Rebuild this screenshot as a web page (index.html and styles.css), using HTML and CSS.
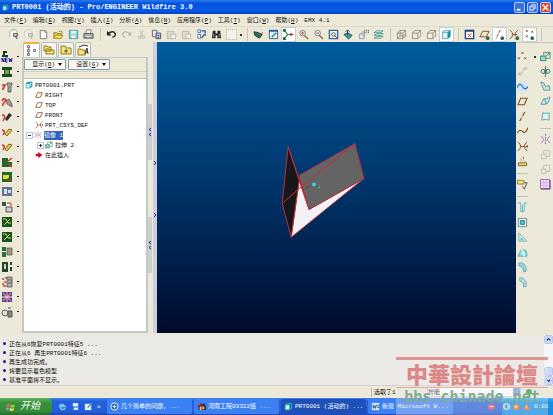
FILE: index.html
```html
<!DOCTYPE html>
<html lang="zh-CN">
<head>
  <meta charset="UTF-8">
  <meta name="viewport" content="width=device-width, initial-scale=1.0">
  <title>PRT0001 (活动的) - Pro/ENGINEER Wildfire 3.0</title>
  <link rel="stylesheet" href="styles.css">
</head>
<body>
  <svg class="defs" aria-hidden="true">
    <symbol id="page-find" viewBox="0 0 12 12"><path d="M2 9V3l2-2h4l2 2v6" fill="#fff" stroke="#999"/><path d="M6 5h4v3H6zM8 8l2 3" fill="#ddd" stroke="#444"/></symbol>
    <symbol id="page" viewBox="0 0 12 12"><path d="M2.500 1.500h5l2 2v7h-7z" fill="#fff" stroke="#777"/><path d="M7.500 1.500v2h2" fill="none" stroke="#777"/></symbol>
    <symbol id="open" viewBox="0 0 12 12"><path d="M1 10V4h3l1 1h4v5z" fill="#e9c832" stroke="#8c7a1c"/><path d="M3 7h8l-2 3H1z" fill="#ffec70" stroke="#8c7a1c" stroke-width=".7"/><path d="M6 3q2-2 4 0v2" fill="none" stroke="#6b8a3a"/></symbol>
    <symbol id="save" viewBox="0 0 12 12"><path d="M1.500 1.500h9v9h-9z" fill="#8fd6d4" stroke="#4d8d95"/><path d="M3.500 2h5v3h-5zM4 7h4v3H4z" fill="#e8f6f4"/></symbol>
    <symbol id="print" viewBox="0 0 12 12"><path d="M3 5l1-4h5L8 5" fill="#fff" stroke="#777"/><path d="M1 5h10v5H1z" fill="#aaa" stroke="#555"/><path d="M3 8h6" stroke="#eee"/></symbol>
    <symbol id="undo" viewBox="0 0 12 12"><path d="M2 5q6-4 8 0 1 3-3 4" fill="none" stroke="#222" stroke-width="1.500"/><path d="M1 2v5h5z" fill="#222"/></symbol>
    <symbol id="redo" viewBox="0 0 12 12"><path d="M10 5Q4 1 2 5 1 8 5 9" fill="none" stroke="#b5b2a4" stroke-width="1.200"/><path d="M11 3v4H7z" fill="#b5b2a4"/></symbol>
    <symbol id="cut" viewBox="0 0 12 12"><path d="M4 1l3 7M8 1L5 8" stroke="#bbb8aa"/><circle cx="4" cy="9" r="1.500" fill="none" stroke="#bbb8aa"/><circle cx="8" cy="9" r="1.500" fill="none" stroke="#bbb8aa"/></symbol>
    <symbol id="copy" viewBox="0 0 12 12"><path d="M1.500 1.500h5v7h-5z" fill="#e4e8f4" stroke="#667"/><path d="M5.500 4.500h5v6h-5z" fill="#c4cfee" stroke="#446"/><path d="M7 7h2M7 9h2" stroke="#446"/></symbol>
    <symbol id="paste" viewBox="0 0 12 12"><path d="M1.500 2.500h7v8h-7z" fill="#dedbcd" stroke="#bbb8aa"/><path d="M5.500 5.500h5v5h-5z" fill="#f3f1e8" stroke="#bbb8aa"/></symbol>
    <symbol id="regen" viewBox="0 0 12 12"><path d="M2 1h3v3H2zM2 6h3v4H2z" fill="#fff" stroke="#4870b0"/><path d="M6 2h4v3M6 10l3-4 2 1" fill="none" stroke="#335b9e" stroke-width="1.500"/></symbol>
    <symbol id="find" viewBox="0 0 12 12"><path d="M2 2h3v3h2V2h3l1 8H7V7H5v3H1z" fill="#26262c"/><path d="M3 5v4M9 5v4" stroke="#999"/></symbol>
    <symbol id="select" viewBox="0 0 12 12"><path d="M.500 .500h11v11h-11z" fill="#f4f2ea" stroke="#aaa" stroke-dasharray="1 1"/></symbol>
    <symbol id="spin" viewBox="0 0 12 12"><path d="M1 3l5 1 4 2-3 4-5-3z" fill="#1b765e" stroke="#163f38"/><path d="M6 6l5-2" stroke="#d33"/></symbol>
    <symbol id="repaint" viewBox="0 0 12 12"><path d="M1.500 1.500h9v9h-9z" fill="#e8f1fa" stroke="#2d5e92"/><path d="M1 2h10" stroke="#2d5e92" stroke-width="2"/><path d="M4 9l5-5" stroke="#2b82c0" stroke-width="1.500"/></symbol>
    <symbol id="center" viewBox="0 0 12 12"><path d="M2 2l3 4-3 4M5 6h4" fill="none" stroke="#3a7d48" stroke-width="1.300"/><path d="M0 0h3v3H0zM0 9h3v3H0z" fill="#2a6a3a"/><path d="M8 4l4 2-4 2z" fill="#c33"/></symbol>
    <symbol id="zoom-in" viewBox="0 0 12 12"><circle cx="5" cy="4.500" r="3" fill="#edf3f6" stroke="#777"/><path d="M7 7l4 4" stroke="#8d6e3e" stroke-width="1.500"/><path d="M3.500 4.500h3M5 3v3" stroke="#c33"/></symbol>
    <symbol id="zoom-out" viewBox="0 0 12 12"><circle cx="5" cy="4.500" r="3" fill="#edf3f6" stroke="#777"/><path d="M7 7l4 4" stroke="#8d6e3e" stroke-width="1.500"/><path d="M3.500 4.500h3" stroke="#c33"/></symbol>
    <symbol id="refit" viewBox="0 0 12 12"><path d="M1.500 1.500h9v9h-9z" fill="#eef4fb" stroke="#3c6a98" stroke-width="1.500"/><circle cx="6" cy="6" r="2" fill="none" stroke="#555"/><path d="M7 7l3 3" stroke="#555"/></symbol>
    <symbol id="orient" viewBox="0 0 12 12"><path d="M1 6l4-2 5 3-4 4z" fill="#3c9aa0" stroke="#1c585c"/><path d="M5 1v6M3 3l2-2 2 2" stroke="#246" fill="none"/></symbol>
    <symbol id="views" viewBox="0 0 12 12"><path d="M1.500 5.500h5v5h-5zM3 5l2-2h2v5L7 9" fill="#dde4e4" stroke="#99a"/><path d="M7.500 1v3M9.500 1v3M11.500 1v3" stroke="#333" stroke-dasharray="1 1"/></symbol>
    <symbol id="layers" viewBox="0 0 12 12"><path d="M1 10l3-2h7L9 10zM1 7l3-2h7L9 7zM1 4l3-2h7L9 4z" fill="#d0ece8" stroke="#3c8a84" stroke-width=".8"/></symbol>
    <symbol id="wire" viewBox="0 0 12 12"><path d="M1.500 4.500h6v6h-6zM4.500 1.500h6v6h-6zM1.500 4.500l3-3M7.500 4.500l3-3M7.500 10.500l3-3M1.500 10.500l3-3" fill="none" stroke="#817a65" stroke-width=".8"/></symbol>
    <symbol id="nohidden" viewBox="0 0 12 12"><path d="M1.500 4.500h6v6h-6zM1.500 4.500l3-3h6v6l-3 3M7.500 4.500l3-3" fill="none" stroke="#817a65" stroke-width=".8"/></symbol>
    <symbol id="shade" viewBox="0 0 12 12"><path d="M1.500 3.500h6v7h-6z" fill="#d9f5f6" stroke="#58aab4"/><path d="M1.500 3.500l3-2h6l-3 2z" fill="#f1ffff" stroke="#58aab4"/><path d="M7.500 3.500l3-2v7l-3 2z" fill="#228c9b"/></symbol>
    <symbol id="model" viewBox="0 0 12 12"><path d="M1.500 1.500h9v9h-9z" fill="#fff" stroke="#24407c" stroke-width="1.500"/><path d="M1 2h10" stroke="#24407c" stroke-width="2"/><path d="M4 5l4 4M8 5L4 9" stroke="#b33"/></symbol>
    <symbol id="plane" viewBox="0 0 12 12"><path d="M1 9.500l3-7h7l-3 7z" fill="none" stroke="#80501f" stroke-width="1.200"/></symbol>
    <symbol id="plane-eye" viewBox="0 0 12 12"><path d="M1 8.500l3-6h7l-3 6z" fill="none" stroke="#80501f"/><circle cx="9.500" cy="10" r="2" fill="#286b4c"/></symbol>
    <symbol id="axis" viewBox="0 0 12 12"><path d="M8.500 1L3 11" stroke="#80501f" stroke-width="1.300" stroke-dasharray="5 1 1 1"/></symbol>
    <symbol id="axis-eye" viewBox="0 0 12 12"><path d="M7 1L2 11" stroke="#80501f" stroke-dasharray="4 1"/><circle cx="9" cy="10" r="2" fill="#286b4c"/></symbol>
    <symbol id="points" viewBox="0 0 12 12"><path d="M5 1l2 2M7 1L5 3M1 7l2 2M3 7L1 9M8 7l2 2M10 7L8 9" stroke="#80401f"/></symbol>
    <symbol id="points-eye" viewBox="0 0 12 12"><path d="M2 1l2 2M4 1L2 3M8 2l2 2M10 2L8 4M2 7l2 2M4 7L2 9" stroke="#a0301f"/><circle cx="9" cy="10" r="2" fill="#286b4c"/></symbol>
    <symbol id="csys" viewBox="0 0 12 12"><path d="M1 1q6 5 0 10M4 6h5M11 1Q5 6 11 11" fill="none" stroke="#80501f"/><path d="M10 5h2v2h-2z" fill="#80501f"/></symbol>
    <symbol id="csys-eye" viewBox="0 0 12 12"><path d="M1 1q6 5 0 10M4 6h5M10 1Q5 5 7 8" fill="none" stroke="#80501f"/><circle cx="9" cy="10" r="2" fill="#286b4c"/></symbol>
    <symbol id="curve" viewBox="0 0 12 12"><path d="M0 8q3-5 6-2t6-4" fill="none" stroke="#80501f" stroke-width="1.200"/></symbol>
    <symbol id="sketch" viewBox="0 0 12 12"><path d="M1 1h10v10H1z" fill="#cfe6fa"/><path d="M0 7q3-6 6-1t6 0" fill="none" stroke="#2d70bd" stroke-width="1.400"/></symbol>
    <symbol id="pts-dim" viewBox="0 0 12 12"><path d="M2 9q3 2 4-3t4-4" fill="none" stroke="#b8b5a7"/><path d="M1 7h3v3H1zM8 1h3v3H8z" fill="#c8c5b7"/></symbol>
    <symbol id="analysis" viewBox="0 0 12 12"><path d="M1.500 7.500h9v3h-9z" fill="#e4d37a" stroke="#80651f"/><path d="M4 3l1 1M7 1v2M4 6l1-1M8 5l1 1" fill="none" stroke="#80501f"/></symbol>
    <symbol id="annot" viewBox="0 0 12 12"><path d="M.500 1.500h7v4h-7z" fill="#f3e86c" stroke="#85803b"/><path d="M8 4h3L8 11M6 8l2 3" fill="none" stroke="#444"/></symbol>
    <symbol id="hole" viewBox="0 0 12 12"><path d="M1 1h3v9l2 1V3M11 1H8v9l-2 1" fill="#bdeff0" stroke="#4ba9b3" stroke-width=".8"/></symbol>
    <symbol id="shell" viewBox="0 0 12 12"><path d="M1.500 1.500h9v9h-9z" fill="#d8f0ee" stroke="#668d93"/><path d="M4 4h4v4H4z" fill="#62cbd2" stroke="#336c72"/></symbol>
    <symbol id="rib" viewBox="0 0 12 12"><path d="M2 1v9h9z" fill="#d0eeee" stroke="#6f9da3" stroke-width=".8"/><path d="M4 6v3h4" fill="#58bcc4"/></symbol>
    <symbol id="draft" viewBox="0 0 12 12"><path d="M1 10l4-8 5 2 1 6z" fill="#92dfe0" stroke="#4c969c" stroke-width=".8"/><path d="M5 2l3 8" stroke="#fff" stroke-width="1.500"/></symbol>
    <symbol id="round" viewBox="0 0 12 12"><path d="M2 1h4q5 3 4 9l-3 1Q8 6 2 4z" fill="#93dadd" stroke="#5b9ca3" stroke-width=".8"/></symbol>
    <symbol id="chamfer" viewBox="0 0 12 12"><path d="M3 1h3l4 4v5l-3 1V7L3 4z" fill="#a8e1e3" stroke="#5b9ca3" stroke-width=".8"/></symbol>
    <symbol id="extrude" viewBox="0 0 12 12"><path d="M.500 5.500h6v5h-6z" fill="#8fd9d3" stroke="#388275"/><path d="M4 5V1.500h7V8H7M6 6l4-4M7 2h3v3" fill="none" stroke="#388275" stroke-width=".8"/></symbol>
    <symbol id="revolve" viewBox="0 0 12 12"><path d="M6 0v12M1 6q1-4 4-2v4q-3 1-4-2zM11 6q-1-4-4-2v4q3 1 4-2z" fill="#cce9e1" stroke="#496d6c"/></symbol>
    <symbol id="sweep" viewBox="0 0 12 12"><path d="M1 1l3 1 2 4 4-1 1 5H4L2 4z" fill="#c1e8e4" stroke="#48827f" stroke-width=".8"/></symbol>
    <symbol id="blend" viewBox="0 0 12 12"><path d="M1 9l3-6q3 1 7-2L9 7q-3 3-8 2zM5 3l2 6" fill="#c1eaf0" stroke="#488292" stroke-width=".8"/></symbol>
    <symbol id="style" viewBox="0 0 12 12"><path d="M3 2q4 1 7 0v8q-4-2-8 0z" fill="#d6f4f3" stroke="#488d92" stroke-width=".8"/></symbol>
    <symbol id="mirror" viewBox="0 0 12 12"><path d="M6 0v12" stroke="#777" stroke-dasharray="2 1"/><path d="M1 2l3 3v2l-3 3M11 2L8 5v2l3 3" fill="#f0dcf8" stroke="#b36fd0"/></symbol>
    <symbol id="merge" viewBox="0 0 12 12"><path d="M1.500 5.500h5v5h-5zM4 5V1.500h6.500V8H7" fill="none" stroke="#b8b5a7" stroke-width=".8"/></symbol>
    <symbol id="pattern" viewBox="0 0 12 12"><path d="M.500 .500h10v10h-10z" fill="#eddff5" stroke="#965eb0"/><path d="M4 1v9M7 1v9M1 4h9M1 7h9" stroke="#cda5e0" stroke-width=".7"/><path d="M11 1v10H1" fill="none" stroke="#5d3a78"/></symbol>
    <symbol id="new" viewBox="0 0 12 12"><path d="M2 0h4v2H4v2h3v2H1V4h1z" fill="#173d1f"/><path d="M1 11V7l2 4V7M6.500 7H4.500v4h2M4.500 9h2M8 7l.7 4L9.500 8l.8 3L11 7" fill="none" stroke="#16169c"/></symbol>
    <symbol id="plate" viewBox="0 0 12 12"><path d="M1 1h10v3H9v4h2v3H1V8h2V4H1z" fill="#194b20"/><path d="M4 4h4v4H4z" fill="#7c9c4c"/></symbol>
    <symbol id="screw" viewBox="0 0 12 12"><path d="M6 2h5v2l-1 1v6H7V5L6 4z" fill="#9ca3a3" stroke="#444" stroke-width=".7"/><path d="M1 4h3L2 8v1" fill="none" stroke="#d52b24" stroke-width="1.600"/></symbol>
    <symbol id="screw-red" viewBox="0 0 12 12"><path d="M5 5l3-2 3 5v3l-5-3z" fill="#999" stroke="#555" stroke-width=".7"/><path d="M1 5q2-4 4-1L2 8v2" fill="none" stroke="#d52b24" stroke-width="1.500"/></symbol>
    <symbol id="bolt" viewBox="0 0 12 12"><path d="M4 8l4-6 3 2-5 6z" fill="#2b3330"/><path d="M1 4q4 0 2 4l-1 2" fill="none" stroke="#d52b24" stroke-width="1.500"/></symbol>
    <symbol id="pin" viewBox="0 0 12 12"><path d="M4 8l4-5 3 1-5 6z" fill="#ddcc45" stroke="#7d6719"/><path d="M1 4q4 0 1 5" fill="none" stroke="#d52b24" stroke-width="1.500"/></symbol>
    <symbol id="eject" viewBox="0 0 12 12"><path d="M1 2h6v4h4v5H1z" fill="#23652b"/><path d="M6 6l5-4M7 8l4 3" stroke="#c5432b" stroke-width="1.500"/></symbol>
    <symbol id="base" viewBox="0 0 12 12"><path d="M1 1h10v10H1z" fill="#22672c"/><path d="M2 4h6v4H2z" fill="#e0df3a"/><path d="M7 7l3 3" stroke="#c22" stroke-width="1.500"/></symbol>
    <symbol id="mold" viewBox="0 0 12 12"><path d="M1 1h10v9H1z" fill="#64708f"/><path d="M3 3h3v5H3zM7 4h3v3H7z" fill="#d5def1"/></symbol>
    <symbol id="slider" viewBox="0 0 12 12"><path d="M5 6h6v5H5z" fill="#ccc" stroke="#555"/><path d="M1 1h4v4H1z" fill="#355"/><path d="M6 2h4v3" fill="none" stroke="#c32"/></symbol>
    <symbol id="cool" viewBox="0 0 12 12"><path d="M1 1h10v10H1z" fill="#155321"/><path d="M2 3h3l2 4h3M3 9l6-6" fill="none" stroke="#d0d95a"/></symbol>
    <symbol id="drill" viewBox="0 0 12 12"><path d="M1 1h6v10H1zM9 1h2v3H9zM9 6h2v4H9z" fill="#20472c"/><path d="M3 3h2v5H3z" fill="#d6dc8e"/></symbol>
    <symbol id="parts" viewBox="0 0 12 12"><path d="M1 1h4v4H1zM1 6h4v5H1z" fill="#2c7038"/><path d="M6 2h5v7H6z" fill="#999a7c" stroke="#555" stroke-width=".7"/></symbol>
    <symbol id="bom" viewBox="0 0 12 12"><path d="M6 1h5v10H6zM7 4h4M7 7h4" fill="#aaa" stroke="#666"/><path d="M1 3h2M4 2h2M1 8h2M3 6h2M2 10h3" stroke="#d43a2c" stroke-width="1.500"/></symbol>
    <symbol id="flag" viewBox="0 0 12 12"><path d="M1 1h10v10H1z" fill="#3548a5"/><path d="M2 2l8 8M10 2l-8 8M6 1v10" stroke="#e77" stroke-width="1.500"/><path d="M1 6h10" stroke="#fff"/></symbol>
    <symbol id="gear" viewBox="0 0 12 12"><circle cx="4" cy="7" r="3" fill="#ddd" stroke="#666"/><path d="M7 5h4v6H7zM7 2h3" fill="#888" stroke="#555"/></symbol>
    <symbol id="tree" viewBox="0 0 12 12"><path d="M2.500 1v10" stroke="#777"/><path d="M1.500 .500h2v2h-2zM1.500 4.500h2v2h-2zM1.500 8.500h2v2h-2zM7.500 4.500h2v2h-2z" fill="#fff" stroke="#555" stroke-width=".8"/></symbol>
    <symbol id="folders" viewBox="0 0 12 12"><path d="M1 7V2h3l1 1h3v4zM3 10V5h3l1 1h4v4z" fill="#f7e672" stroke="#8b7a23"/></symbol>
    <symbol id="fav" viewBox="0 0 12 12"><path d="M1 10V2h4l1 2h5v6z" fill="#f7e672" stroke="#8b7a23"/><path d="M4 7h4M6 5v4" stroke="#555"/></symbol>
    <symbol id="conn" viewBox="0 0 12 12"><path d="M1 11V5h3l1 1h3v5z" fill="#f7e672" stroke="#8b7a23"/><path d="M2 3l5-2 4 1M8 10l2-6 1 6M8 8h3" fill="none" stroke="#333"/></symbol>
    <symbol id="part" viewBox="0 0 12 12"><path d="M1.500 3.500h6v7h-6z" fill="#bff3f4" stroke="#339aa5"/><path d="M1.500 3.500l3-2h6l-3 2zM7.500 10.500l3-2v-7" fill="#2fa9b3" stroke="#339aa5"/></symbol>
    <symbol id="insert" viewBox="0 0 12 12"><path d="M1 4h4V1l6 5-6 5V8H1z" fill="#c3102b"/></symbol>
    <symbol id="chev-left" viewBox="0 0 4 10"><path d="M3 1L1 2.500 3 4M3 6L1 7.500 3 9" fill="none" stroke="#1c1cb0"/></symbol>
    <symbol id="chev-right" viewBox="0 0 4 10"><path d="M1 3l2 2-2 2" fill="none" stroke="#1c1cb0"/></symbol>
  </svg>

  <header class="titlebar">
    <svg class="app-icon" viewBox="0 0 12 12"><use href="#part"/></svg>
    <h1>PRT0001 (活动的) - Pro/ENGINEER Wildfire 3.0</h1>
    <div class="window-buttons">
      <button aria-label="最小化"><svg viewBox="0 0 10 10"><path d="M2 7.500h4" stroke="#fff" stroke-width="2"/></svg></button>
      <button aria-label="还原"><svg viewBox="0 0 10 10"><path d="M4 3V2h4v4H7M2 4h4v4H2z" fill="none" stroke="#fff"/></svg></button>
      <button class="close" aria-label="关闭"><svg viewBox="0 0 10 10"><path d="M2 2l6 6M8 2L2 8" stroke="#fff" stroke-width="1.500"/></svg></button>
    </div>
  </header>

  <nav class="menu">
    <a href="#">文件(<u>F</u>)</a>
    <a href="#">编辑(<u>E</u>)</a>
    <a href="#">视图(<u>V</u>)</a>
    <a href="#">插入(<u>I</u>)</a>
    <a href="#">分析(<u>A</u>)</a>
    <a href="#">信息(<u>N</u>)</a>
    <a href="#">应用程序(<u>P</u>)</a>
    <a href="#">工具(<u>T</u>)</a>
    <a href="#">窗口(<u>W</u>)</a>
    <a href="#">帮助(<u>H</u>)</a>
    <a href="#">EMX 4.1</a>
  </nav>

  <div class="toolbar">
    <button aria-label="查找文件"><svg><use href="#page-find"/></svg></button>
    <button aria-label="拭除" class="dim"><svg><use href="#page-find"/></svg></button>
    <button aria-label="新建"><svg><use href="#page"/></svg></button>
    <button aria-label="打开"><svg><use href="#open"/></svg></button>
    <button aria-label="保存"><svg><use href="#save"/></svg></button>
    <button aria-label="打印"><svg><use href="#print"/></svg></button>
    <span class="sep"></span>
    <button aria-label="撤消"><svg><use href="#undo"/></svg></button>
    <button aria-label="重做"><svg><use href="#redo"/></svg></button>
    <button aria-label="剪切"><svg><use href="#cut"/></svg></button>
    <button aria-label="复制"><svg><use href="#copy"/></svg></button>
    <button aria-label="粘贴"><svg><use href="#paste"/></svg></button>
    <button aria-label="选择性粘贴"><svg><use href="#paste"/></svg></button>
    <button aria-label="再生"><svg><use href="#regen"/></svg></button>
    <button aria-label="查找"><svg><use href="#find"/></svg></button>
    <button aria-label="选取"><svg><use href="#select"/></svg></button>
    <span class="more"></span>
    <span class="sep"></span>
    <button aria-label="旋转中心"><svg><use href="#spin"/></svg></button>
    <button aria-label="重画"><svg><use href="#repaint"/></svg></button>
    <button aria-label="定向模式" class="on"><svg><use href="#center"/></svg></button>
    <button aria-label="放大"><svg><use href="#zoom-in"/></svg></button>
    <button aria-label="缩小"><svg><use href="#zoom-out"/></svg></button>
    <button aria-label="重新调整"><svg><use href="#refit"/></svg></button>
    <button aria-label="重定向"><svg><use href="#orient"/></svg></button>
    <button aria-label="视图列表"><svg><use href="#views"/></svg></button>
    <button aria-label="层"><svg><use href="#layers"/></svg></button>
    <span class="sep"></span>
    <button aria-label="线框"><svg><use href="#wire"/></svg></button>
    <button aria-label="隐藏线"><svg><use href="#nohidden"/></svg></button>
    <button aria-label="无隐藏线"><svg><use href="#nohidden"/></svg></button>
    <button aria-label="着色" class="on"><svg><use href="#shade"/></svg></button>
    <span class="sep"></span>
    <button aria-label="模型树"><svg><use href="#model"/></svg></button>
    <button aria-label="平面显示"><svg><use href="#plane-eye"/></svg></button>
    <button aria-label="轴显示" class="on"><svg><use href="#axis-eye"/></svg></button>
    <button aria-label="坐标系显示"><svg><use href="#csys-eye"/></svg></button>
    <button aria-label="点显示" class="on"><svg><use href="#points-eye"/></svg></button>
    <span class="sep"></span>
  </div>

  <main class="work">
    <div class="rail emx">
      <button aria-label="新建组件"><svg><use href="#new"/></svg></button>
      <button aria-label="模板"><svg><use href="#plate"/></svg></button>
      <button aria-label="螺钉"><svg><use href="#screw"/></svg></button>
      <button aria-label="螺钉组"><svg><use href="#screw-red"/></svg></button>
      <button aria-label="螺栓"><svg><use href="#bolt"/></svg></button>
      <button aria-label="销"><svg><use href="#pin"/></svg></button>
      <button aria-label="顶针"><svg><use href="#pin"/></svg></button>
      <button aria-label="顶出"><svg><use href="#eject"/></svg></button>
      <button aria-label="模座"><svg><use href="#base"/></svg></button>
      <button aria-label="模具"><svg><use href="#mold"/></svg></button>
      <button aria-label="滑块"><svg><use href="#slider"/></svg></button>
      <button aria-label="冷却"><svg><use href="#cool"/></svg></button>
      <button aria-label="冷却孔"><svg><use href="#cool"/></svg></button>
      <button aria-label="标准件"><svg><use href="#parts"/></svg></button>
      <button aria-label="钻孔"><svg><use href="#drill"/></svg></button>
      <button aria-label="材料清单"><svg><use href="#bom"/></svg></button>
      <button aria-label="语言"><svg><use href="#flag"/></svg></button>
      <button aria-label="选项"><svg><use href="#gear"/></svg></button>
    </div>

    <aside class="navigator">
      <div class="tabs">
        <button class="active" aria-label="模型树"><svg><use href="#tree"/></svg></button>
        <button aria-label="文件夹"><svg><use href="#folders"/></svg></button>
        <button aria-label="收藏夹"><svg><use href="#fav"/></svg></button>
        <button aria-label="连接"><svg><use href="#conn"/></svg></button>
      </div>
      <div class="panel">
        <div class="options">
          <button><span>显示(<u>O</u>)</span><i class="caret"></i></button>
          <button><span>设置(<u>G</u>)</span><i class="caret"></i></button>
        </div>
        <div class="column-head"></div>
        <ul class="tree">
          <li><svg><use href="#part"/></svg>PRT0001.PRT</li>
          <li class="child"><svg><use href="#plane"/></svg>RIGHT</li>
          <li class="child"><svg><use href="#plane"/></svg>TOP</li>
          <li class="child"><svg><use href="#plane"/></svg>FRONT</li>
          <li class="child"><svg><use href="#csys"/></svg>PRT_CSYS_DEF</li>
          <li class="branch"><svg class="toggle" viewBox="0 0 5 5"><path d="M1 2.500h3"/></svg><svg><use href="#mirror"/></svg><span class="selected">镜像 1</span></li>
          <li class="branch deep"><svg class="toggle" viewBox="0 0 5 5"><path d="M1 2.500h3M2.500 1v3"/></svg><svg><use href="#extrude"/></svg>拉伸 2</li>
          <li class="child"><svg><use href="#insert"/></svg>在此插入</li>
        </ul>
      </div>
    </aside>

    <div class="sash">
      <div class="grips">
        <span><svg><use href="#chev-left"/></svg></span>
        <span><svg><use href="#chev-left"/></svg></span>
      </div>
      <div class="edge">
        <svg><use href="#chev-right"/></svg>
        <svg><use href="#chev-right"/></svg>
      </div>
    </div>

    <section class="viewport">
      <svg viewBox="0 0 359 292" role="img" aria-label="零件">
        <g stroke="#b8303c" stroke-linejoin="round">
          <path d="M142 139L152 168L207 137L134 196z" fill="#f3f1f3"/>
          <path d="M142 134L198 102L207 137L152 168z" fill="#646465"/>
          <path d="M131 105L142 139L134 196L125 162z" fill="#17171b"/>
          <path d="M131 105L152 168M125 162L142 147L198 102" fill="none"/>
        </g>
        <path d="M150 146L157 143L162 146" fill="none" stroke="#456"/>
        <circle cx="150" cy="146" r="1" fill="#a3202c"/>
        <circle cx="157" cy="143" r="2" fill="#53c5df"/>
        <circle cx="162" cy="146" r="1" fill="#37d24d"/>
      </svg>
    </section>

    <div class="rail features">
      <div class="col">
        <button aria-label="点"><svg><use href="#points"/></svg></button>
        <button aria-label="偏移点"><svg><use href="#pts-dim"/></svg></button>
        <button aria-label="草绘"><svg><use href="#sketch"/></svg></button>
        <button aria-label="平面"><svg><use href="#plane"/></svg></button>
        <button aria-label="轴"><svg><use href="#axis"/></svg></button>
        <button aria-label="曲线"><svg><use href="#curve"/></svg></button>
        <button aria-label="坐标系"><svg><use href="#csys"/></svg></button>
        <button aria-label="分析"><svg><use href="#analysis"/></svg></button>
        <span class="rule"></span>
        <button aria-label="注释"><svg><use href="#annot"/></svg></button>
        <span class="rule"></span>
        <button aria-label="孔"><svg><use href="#hole"/></svg></button>
        <button aria-label="壳"><svg><use href="#shell"/></svg></button>
        <button aria-label="筋"><svg><use href="#rib"/></svg></button>
        <button aria-label="拔模"><svg><use href="#draft"/></svg></button>
        <button aria-label="倒圆角"><svg><use href="#round"/></svg></button>
        <button aria-label="倒角"><svg><use href="#chamfer"/></svg></button>
      </div>
      <span class="more"></span>
      <div class="col">
        <button aria-label="拉伸"><svg><use href="#extrude"/></svg></button>
        <button aria-label="旋转"><svg><use href="#revolve"/></svg></button>
        <button aria-label="扫描"><svg><use href="#sweep"/></svg></button>
        <button aria-label="混合"><svg><use href="#blend"/></svg></button>
        <button aria-label="造型"><svg><use href="#style"/></svg></button>
        <span class="rule"></span>
        <button aria-label="镜像"><svg><use href="#mirror"/></svg></button>
        <button aria-label="合并"><svg><use href="#merge"/></svg></button>
        <button aria-label="修剪"><svg><use href="#merge"/></svg></button>
        <button aria-label="阵列"><svg><use href="#pattern"/></svg></button>
      </div>
    </div>
  </main>

  <section class="messages">
    <ul>
      <li>正在从6恢复PRT0001特征5 ...</li>
      <li>正在从6 再生PRT0001特征6 ...</li>
      <li>再生成功完成。</li>
      <li>将要显示着色模型</li>
      <li>基准平面将不显示。</li>
    </ul>
    <div class="scroll">
      <button aria-label="向上"><svg viewBox="0 0 8 8"><path d="M2 5l2-2 2 2" fill="none" stroke="#345" stroke-width="1.500"/></svg></button>
      <span class="thumb"></span>
      <button aria-label="向下"><svg viewBox="0 0 8 8"><path d="M2 3l2 2 2-2" fill="none" stroke="#345" stroke-width="1.500"/></svg></button>
    </div>
  </section>

  <div class="status">
    <span class="picked">选取了1</span>
    <select aria-label="过滤器"><option>智能</option></select>
    <span class="light"></span>
  </div>

  <footer class="taskbar">
    <button class="start">
      <svg viewBox="0 0 12 12"><path d="M1 3q2-2 4 0L4 6Q2 5 0 6z" fill="#f0643a"/><path d="M6 3q2 2 5 0l-1 3q-2 2-5 0z" fill="#8fd04c"/><path d="M0 7q2-1 4 0l-1 3q-2-1-4 0z" fill="#6aa4f4"/><path d="M5 7q2 2 5 0l-1 3q-2 2-5 0z" fill="#f7d64b"/></svg>
      开始
    </button>
    <div class="quick">
      <a href="#" aria-label="浏览器"><svg viewBox="0 0 10 10"><path d="M8 7q-3 3-5 0t0-4 5 2H2" fill="none" stroke="#7fd3fa" stroke-width="1.500"/></svg></a>
      <a href="#" aria-label="网络"><svg viewBox="0 0 10 10"><path d="M2 1h6v4H2zM3 6h5v3H3z" fill="#d7eefc"/></svg></a>
      <a href="#" aria-label="桌面"><svg viewBox="0 0 10 10"><path d="M1 2h7v7H1z" fill="#e3f2fc"/><path d="M4 6l5-5" stroke="#58a" stroke-width="1.500"/></svg></a>
      <span>»</span>
    </div>
    <div class="tasks">
      <button><svg viewBox="0 0 10 10"><circle cx="5" cy="5" r="4" fill="#2d60b4" stroke="#fff"/><path d="M3 5h4M5 3v4" stroke="#fff"/></svg>几个简单的问题，...</button>
      <button><svg viewBox="0 0 10 10"><path d="M1 4l3-3 2 2 2-2 2 4v4H2z" fill="#402820"/><path d="M3 5h2v4H3zM6 5h2v3H6z" fill="#f3c2a0"/><path d="M1 2h3v2H1z" fill="#d84031"/></svg>河南工院03322班 ...</button>
      <button class="current"><svg viewBox="0 0 12 12"><use href="#part"/></svg>PRT0001 (活动的) ...</button>
      <button><svg viewBox="0 0 10 10"><path d="M1 1h8v8H1z" fill="#dbe8fb"/><path d="M2 3l1 4 1-3 1 3 1-4M7 4h2M7 6h2" fill="none" stroke="#27489b"/></svg>新建 Microsoft W...</button>
    </div>
    <div class="notice">
      <svg viewBox="0 0 10 10"><path d="M1 3h8v5H1z" fill="#e0483a"/><path d="M3 5h4" stroke="#fff"/></svg>
    </div>
    <div class="tray">
      <svg viewBox="0 0 10 10"><circle cx="5" cy="5" r="4" fill="#a5d8f5"/><path d="M6 3L4 5l2 2" fill="none" stroke="#345f9c" stroke-width="1.500"/></svg>
      <svg viewBox="0 0 10 10"><path d="M1 4l4-3 4 4-2 4H2z" fill="#e06828"/><path d="M3 4h3v3H3z" fill="#fbe08c"/></svg>
      <svg viewBox="0 0 10 10"><path d="M5 1l4 8H1z" fill="#e2662e"/><path d="M5 4v3" stroke="#fff"/></svg>
      <time>0:01</time>
    </div>
  </footer>

  <div class="watermark">
    <strong>中華設計論壇</strong>
    <span>bbs.chinade.net</span>
  </div>
</body>
</html>
```
FILE: styles.css
```css
* {
  box-sizing: border-box;
}
body {
  margin: 0;
  height: 100vh;
  display: flex;
  flex-direction: column;
  overflow: hidden;
  background: #ece9d8;
  color: #111;
  font-family: "Liberation Mono", "Noto Sans CJK SC", monospace;
  font-size: 6px;
  line-height: 9px;
}
button, select {
  font: inherit;
  color: inherit;
  margin: 0;
  padding: 0;
  border: 0;
  background: none;
}
a {
  color: inherit;
  text-decoration: none;
}
ul {
  list-style: none;
  margin: 0;
  padding: 0;
}
svg {
  display: block;
  width: 12px;
  height: 12px;
  flex: none;
}
.defs {
  display: none;
}

/* title bar and menu */
.titlebar {
  display: flex;
  align-items: center;
  gap: 3px;
  height: 14px;
  padding: 0 2px;
  background: linear-gradient(#2a7bf0, #0453dd 25%, #0558ea 75%, #0344b8);
  color: #fff;
}
.titlebar h1 {
  flex: 1;
  margin: 0;
  font-size: 7px;
  line-height: 12px;
  font-weight: bold;
}
.app-icon {
  width: 7px;
  height: 7px;
}
.window-buttons {
  display: flex;
  gap: 2px;
}
.window-buttons button {
  width: 11px;
  height: 11px;
  border: 1px solid #b9ccf5;
  border-radius: 2px;
  background: #3c6fe4;
}
.window-buttons .close {
  background: #dc4d2a;
}
.window-buttons svg {
  width: 9px;
  height: 9px;
}
.menu {
  display: flex;
  align-items: center;
  gap: 6px;
  height: 12px;
  padding: 0 4px;
}

/* toolbars */
.toolbar {
  display: flex;
  align-items: center;
  height: 16px;
  padding: 0 6px;
  border-top: 1px solid #dedac8;
}
.toolbar button {
  display: flex;
  align-items: center;
  justify-content: center;
  width: 15px;
  height: 15px;
}
.toolbar svg {
  width: 11px;
  height: 11px;
}
.toolbar .on {
  background: #fff;
  border: 1px solid #c4cfd6;
}
.dim {
  opacity: .4;
}
.sep {
  width: 8px;
  height: 13px;
  background: linear-gradient(#cbc7b5, #cbc7b5) center / 1px 100% no-repeat;
}
.more {
  width: 2px;
  height: 2px;
  margin: 0 1px;
  background: #333;
}
.work {
  flex: 1;
  display: flex;
  min-height: 0;
}
.rail button {
  display: flex;
  align-items: center;
  height: 15px;
}
.emx {
  width: 22px;
  padding: 7px 1px;
}
.emx button {
  width: 100%;
  justify-content: space-between;
}
.emx button::after {
  content: "";
  width: 2px;
  height: 1px;
  margin-right: 2px;
  background: #222;
}
.features {
  display: flex;
  justify-content: space-between;
  width: 37px;
  padding: 6px 2px 0 1px;
  border-top: 1px solid #cbc7b5;
}
.features svg {
  width: 11px;
  height: 11px;
}
.features .more {
  margin: 7px 0 0 2px;
}
.rule {
  display: block;
  height: 8px;
  background: linear-gradient(#c3bfae, #c3bfae) center / 100% 1px no-repeat;
}

/* model tree */
.navigator {
  display: flex;
  flex-direction: column;
  width: 126px;
}
.tabs {
  display: flex;
  gap: 1px;
  height: 15px;
  padding-left: 1px;
}
.tabs button {
  display: flex;
  align-items: center;
  justify-content: center;
  width: 16px;
  border: 1px solid #b7bdb8;
  border-bottom: 0;
  border-radius: 2px 2px 0 0;
  background: #f6f5ee;
}
.tabs .active {
  width: 17px;
  background: #fff;
  border-top: 2px solid #f0b23c;
}
.panel {
  flex: 1;
  border: 2px solid #c0c8c8;
  border-top-width: 1px;
  background: #fff;
}
.options {
  display: flex;
  gap: 2px;
  height: 13px;
  padding: 1px 0;
  background: #ece9d8;
}
.options button {
  display: flex;
  align-items: center;
  justify-content: flex-end;
  gap: 3px;
  width: 42px;
  padding-right: 3px;
  border: 1px solid #7d9bab;
  border-radius: 1px;
  background: #f7f6f0;
}
.caret {
  border: 2px solid transparent;
  border-top: 3px solid #111;
  border-bottom: 0;
}
.column-head {
  height: 8px;
  border-top: 1px solid #d3d0c0;
  border-bottom: 1px solid #c6c2b0;
  background: #ece9d8;
}
.tree {
  padding-top: 1px;
}
.tree li {
  display: flex;
  align-items: center;
  gap: 2px;
  height: 10px;
  padding-left: 1px;
}
.tree svg {
  width: 8px;
  height: 8px;
}
.tree .child {
  padding-left: 11px;
}
.tree .branch {
  padding-left: 3px;
}
.tree .deep {
  padding-left: 14px;
}
.tree .toggle {
  width: 5px;
  height: 5px;
  outline: 1px solid #c2c6d0;
  stroke: #333;
}
.selected {
  background: #2f62b5;
  color: #fff;
}

/* divider between tree and viewport */
.sash {
  display: flex;
  justify-content: flex-end;
  gap: 1px;
  width: 9px;
}
.sash svg {
  width: 4px;
  height: 10px;
}
.grips, .edge {
  display: flex;
  flex-direction: column;
  align-items: center;
}
.grips {
  width: 4px;
  padding-top: 62px;
  gap: 57px;
}
.grips span {
  display: flex;
  align-items: center;
  height: 56px;
  background: #cfcec8;
}
.edge {
  width: 4px;
  padding-top: 116px;
  gap: 42px;
  background: #cdcde0;
}
.viewport {
  flex: 1;
  min-width: 0;
  background: linear-gradient(#005c9b, #003c75 40%, #000b2e);
}
.viewport svg {
  width: 100%;
  height: 100%;
}

/* message area and status line */
.messages {
  display: flex;
  justify-content: space-between;
  margin-top: 2px;
  background: #ebeae4;
  border-bottom: 1px solid #d3cdcd;
}
.messages ul {
  padding: 5px 3px 0;
}
.messages li::before {
  content: "";
  display: inline-block;
  width: 3px;
  height: 3px;
  margin-right: 3px;
  border-radius: 50%;
  background: #1a1ab0;
  vertical-align: 1px;
}
.scroll {
  display: flex;
  flex-direction: column;
  width: 9px;
  background: #f6f6fb;
}
.scroll button, .thumb {
  height: 9px;
  border: 1px solid #b5c6f2;
  border-radius: 2px;
  background: #c9d7fb;
}
.scroll svg {
  width: 7px;
  height: 7px;
}
.thumb {
  margin-top: auto;
}
.status {
  display: flex;
  align-items: center;
  justify-content: flex-end;
  height: 12px;
  padding-right: 21px;
}
.picked {
  width: 56px;
  padding-left: 2px;
  border-left: 1px solid #b8b4a3;
}
.status select {
  width: 94px;
  height: 10px;
  appearance: none;
  border: 1px solid #c2cde0;
  background: #fff linear-gradient(#7f9be0, #7f9be0) right / 7px 100% no-repeat;
}
.light {
  width: 6px;
  height: 6px;
  margin-left: 5px;
  border-radius: 50%;
  background: #2c9a3c;
}

/* taskbar */
.taskbar {
  display: flex;
  height: 17px;
  background: linear-gradient(#3f83f0, #2560dc 20%, #245ddb 80%, #1a48b8);
  color: #fff;
}
.start {
  display: flex;
  align-items: center;
  gap: 4px;
  width: 52px;
  padding-left: 6px;
  border-radius: 0 5px 5px 0;
  background: linear-gradient(#5cb45c, #388e3b 30%, #348a37 80%, #226b27);
  color: #fff;
  font-size: 10px;
  font-style: italic;
}
.start svg {
  width: 10px;
  height: 10px;
}
.quick {
  display: flex;
  align-items: center;
  gap: 4px;
  width: 55px;
  padding-left: 6px;
}
.quick svg, .tasks svg, .notice svg, .tray svg {
  width: 9px;
  height: 9px;
}
.tasks {
  flex: 1;
  display: flex;
  gap: 2px;
  min-width: 0;
  padding: 1px 34px 1px 0;
}
.tasks button {
  flex: 1;
  display: flex;
  align-items: center;
  gap: 2px;
  min-width: 0;
  padding-left: 3px;
  border-radius: 2px;
  background: #3c81f3;
  color: #fff;
  white-space: nowrap;
}
.tasks .current {
  background: #1e50b8;
}
.notice {
  display: flex;
  align-items: center;
  width: 15px;
}
.tray {
  display: flex;
  align-items: center;
  gap: 1px;
  width: 51px;
  background: linear-gradient(#3fb4f2, #1290e8 25%, #118be2);
}
.tray time {
  margin-left: 2px;
}

/* forum stamp laid over the lower right corner */
.watermark {
  position: absolute;
  right: 5px;
  bottom: 0;
  width: 152px;
  height: 58px;
  border-top: 3px solid #e09393;
  background: rgba(240, 236, 236, .3);
  text-align: center;
  pointer-events: none;
}
.watermark strong {
  display: block;
  border-bottom: 1px solid #e3a9a5;
  color: #dc8888;
  font-family: "Noto Sans CJK TC", sans-serif;
  font-size: 22px;
  font-weight: 900;
  line-height: 27px;
}
.watermark span {
  display: block;
  color: #7eac94;
  font-family: "DejaVu Sans Mono", monospace;
  font-size: 15px;
  font-weight: bold;
  line-height: 18px;
}
```
